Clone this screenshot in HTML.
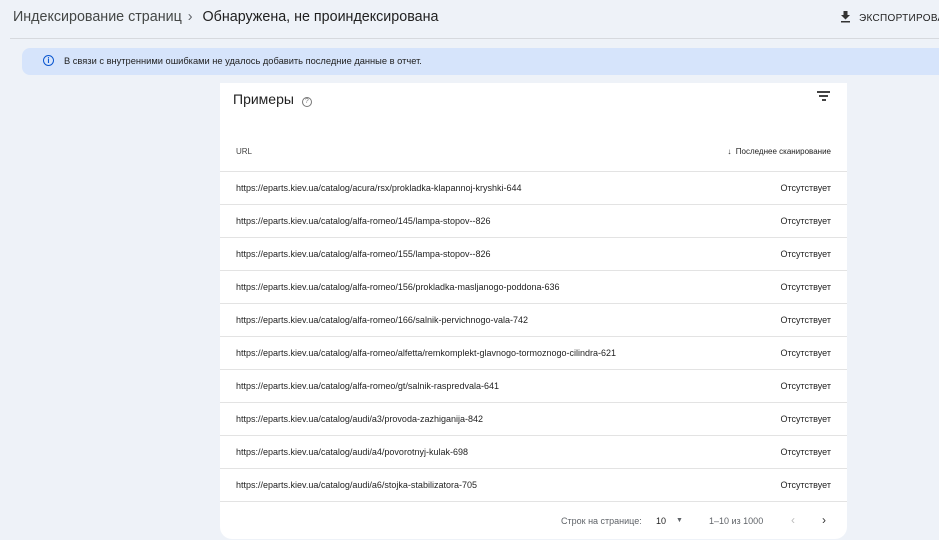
<!DOCTYPE html>
<html><head><meta charset="utf-8"><style>
*{margin:0;padding:0;box-sizing:border-box}
body{width:939px;height:540px;overflow:hidden;background:#eef2f8;font-family:"Liberation Sans",sans-serif;color:#202124;position:relative}
.crumb{position:absolute;top:9px;left:13px;font-size:14.3px;color:#444746;white-space:nowrap}
.crumb b{font-weight:normal;color:#1f1f1f;margin-left:4px}
.crumb span{margin:0 6px;color:#5f6368}
.exp{position:absolute;top:11px;left:840px;font-size:10px;color:#1f1f1f;white-space:nowrap;letter-spacing:.3px}
.sep{position:absolute;top:38px;left:10px;right:0;height:1px;background:#d6d9de}
.ban{position:absolute;top:48px;left:22px;right:0;height:27px;background:#d6e4fb;border-radius:8px 0 0 8px;font-size:9.3px;color:#1f1f1f;padding:8px 0 0 42px}
.ban i{position:absolute;left:21px;top:7px;width:11px;height:11px;border:1.2px solid #0b57d0;border-radius:50%;font-style:normal;font-size:8px;color:#0b57d0;text-align:center;line-height:9px;font-weight:bold}
.card{position:absolute;top:83px;left:220px;width:627px;height:456px;background:#fff;border-radius:0 0 12px 12px}
.title{position:absolute;top:8px;left:13px;font-size:14px;color:#1f1f1f}
.q{display:inline-block;width:10px;height:10px;border:1px solid #777;border-radius:50%;font-size:7px;text-align:center;line-height:8px;color:#777;margin-left:4px;vertical-align:1px}
.filt{position:absolute;top:8px;right:17px;width:13px}
.filt div{height:1.5px;background:#444;margin:0 auto 2.5px}
.hd{position:absolute;top:64px;left:16px;right:16px;font-size:8px;color:#444}
.hd .r{position:absolute;right:0;top:0;color:#1f1f1f}
.row{position:absolute;left:0;right:0;height:33px;border-top:1px solid #e3e3e3;font-size:9px;color:#1f1f1f}
.row .u{position:absolute;left:16px;top:11px}
.row .s{position:absolute;right:16px;top:11px}
.ft{position:absolute;top:433px;left:0;right:0;font-size:9px;color:#5f6368}
</style></head><body>
<div class="crumb">Индексирование страниц<span>›</span><b>Обнаружена, не проиндексирована</b></div>
<div class="exp"><svg width="11" height="12" viewBox="0 0 11 12" style="vertical-align:-2px;margin-right:8px"><path d="M3.5 0h4v4h2.5l-4.5 4.5L1 4h2.5z M1 10h9v1.5H1z" fill="#333"/></svg>ЭКСПОРТИРОВА</div>
<div class="sep"></div>
<div class="ban"><i>i</i>В связи с внутренними ошибками не удалось добавить последние данные в отчет.</div>
<div class="card">
<div class="title">Примеры <span class="q">?</span></div>
<div class="filt"><div style="width:13px"></div><div style="width:9px"></div><div style="width:4px"></div></div>
<div class="hd">URL<span class="r">↓&nbsp; Последнее сканирование</span></div>
<div class="row" style="top:88px"><span class="u">https://eparts.kiev.ua/catalog/acura/rsx/prokladka-klapannoj-kryshki-644</span><span class="s">Отсутствует</span></div>
<div class="row" style="top:121px"><span class="u">https://eparts.kiev.ua/catalog/alfa-romeo/145/lampa-stopov--826</span><span class="s">Отсутствует</span></div>
<div class="row" style="top:154px"><span class="u">https://eparts.kiev.ua/catalog/alfa-romeo/155/lampa-stopov--826</span><span class="s">Отсутствует</span></div>
<div class="row" style="top:187px"><span class="u">https://eparts.kiev.ua/catalog/alfa-romeo/156/prokladka-masljanogo-poddona-636</span><span class="s">Отсутствует</span></div>
<div class="row" style="top:220px"><span class="u">https://eparts.kiev.ua/catalog/alfa-romeo/166/salnik-pervichnogo-vala-742</span><span class="s">Отсутствует</span></div>
<div class="row" style="top:253px"><span class="u">https://eparts.kiev.ua/catalog/alfa-romeo/alfetta/remkomplekt-glavnogo-tormoznogo-cilindra-621</span><span class="s">Отсутствует</span></div>
<div class="row" style="top:286px"><span class="u">https://eparts.kiev.ua/catalog/alfa-romeo/gt/salnik-raspredvala-641</span><span class="s">Отсутствует</span></div>
<div class="row" style="top:319px"><span class="u">https://eparts.kiev.ua/catalog/audi/a3/provoda-zazhiganija-842</span><span class="s">Отсутствует</span></div>
<div class="row" style="top:352px"><span class="u">https://eparts.kiev.ua/catalog/audi/a4/povorotnyj-kulak-698</span><span class="s">Отсутствует</span></div>
<div class="row" style="top:385px"><span class="u">https://eparts.kiev.ua/catalog/audi/a6/stojka-stabilizatora-705</span><span class="s">Отсутствует</span></div>
<div class="row" style="top:418px;height:1px"></div>
<div class="ft"><span style="position:absolute;left:341px">Строк на странице:</span><span style="position:absolute;left:436px;color:#1f1f1f">10</span><span style="position:absolute;left:456px;font-size:7px;top:1px">▼</span><span style="position:absolute;left:489px">1–10 из 1000</span><span style="position:absolute;left:571px;font-size:12px;top:-3px;color:#bbb">‹</span><span style="position:absolute;left:602px;font-size:12px;top:-3px;color:#333">›</span></div>
</div>
</body></html>
